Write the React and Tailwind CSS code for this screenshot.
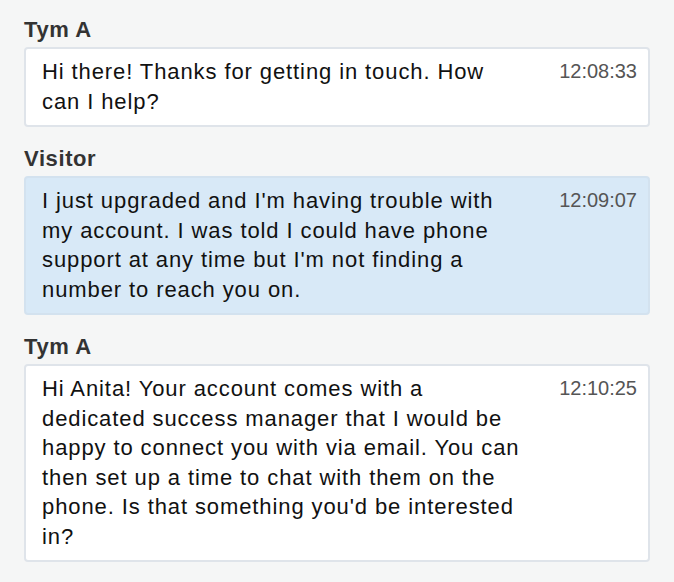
import React from "react";

// lines are kept as in the transcript so the wrap matches
const messages = [
  {
    author: "Tym A",
    time: "12:08:33",
    lines: ["Hi there! Thanks for getting in touch. How", "can I help?"],
    visitor: false,
  },
  {
    author: "Visitor",
    time: "12:09:07",
    lines: [
      "I just upgraded and I'm having trouble with",
      "my account. I was told I could have phone",
      "support at any time but I'm not finding a",
      "number to reach you on.",
    ],
    visitor: true,
  },
  {
    author: "Tym A",
    time: "12:10:25",
    lines: [
      "Hi Anita! Your account comes with a",
      "dedicated success manager that I would be",
      "happy to connect you with via email. You can",
      "then set up a time to chat with them on the",
      "phone. Is that something you'd be interested",
      "in?",
    ],
    visitor: false,
  },
];

export default function App() {
  return (
    <div
      className="min-h-[582px] bg-[#f5f6f6] px-[24px] pt-[16px] pb-4"
      style={{ fontFamily: '"Liberation Sans", Arial, sans-serif' }}
    >
      {messages.map((m, i) => (
        <div key={i} className="mb-[18px]">
          <div className="text-[22px] font-bold leading-[28px] tracking-[0.6px] text-[#333] mb-[3px]">
            {m.author}
          </div>
          <div
            className={
              "flex justify-between rounded-[4px] border-2 pl-[16px] pr-[11px] pt-[8px] pb-[9px] " +
              (m.visitor ? "bg-[#d8e9f7] border-[#d3e2ef]" : "bg-white border-[#dfe4ea]")
            }
          >
            <p className="text-[22px] leading-[29.5px] tracking-[0.9px] text-[#111] whitespace-nowrap">
              {m.lines.map((line, j) => (
                <span key={j} className="block">
                  {line}
                </span>
              ))}
            </p>
            <span className="text-[20px] leading-[29.5px] text-[#555]">
              {m.time}
            </span>
          </div>
        </div>
      ))}
    </div>
  );
}
